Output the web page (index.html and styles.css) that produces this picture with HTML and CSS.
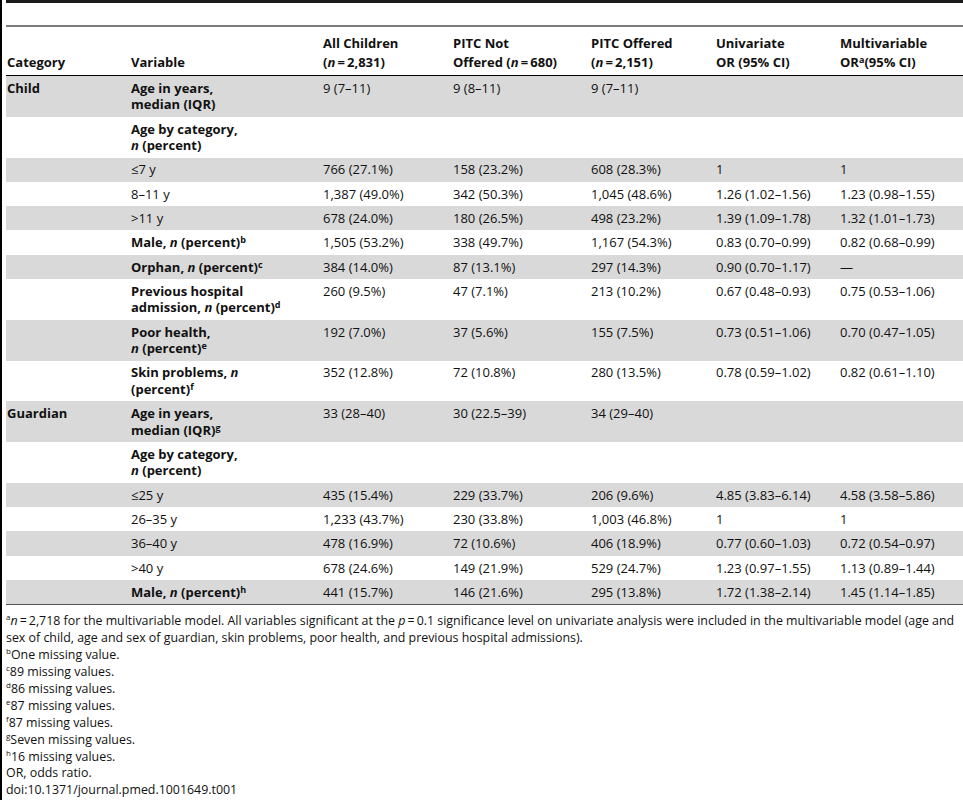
FILE: index.html
```html
<!DOCTYPE html>
<html lang="en">
<head>
  <meta charset="UTF-8">
  <meta name="viewport" content="width=device-width, initial-scale=1.0">
  <title>Table 1. Characteristics of children and guardians</title>
  <link rel="stylesheet" href="styles.css">
</head>
<body>

  <div class="page">
    <div class="title-rule"></div>

    <!-- Main table -->
    <table class="data-table">
      <colgroup>
        <col class="col-cat">
        <col class="col-var">
        <col class="col-all">
        <col class="col-not">
        <col class="col-off">
        <col class="col-uni">
        <col class="col-multi">
      </colgroup>
      <thead>
        <tr>
          <th>Category</th>
          <th>Variable</th>
          <th>All Children<br>(<i>n</i>&thinsp;=&thinsp;2,831)</th>
          <th>PITC Not<br>Offered (<i>n</i>&thinsp;=&thinsp;680)</th>
          <th>PITC Offered<br>(<i>n</i>&thinsp;=&thinsp;2,151)</th>
          <th>Univariate<br>OR (95% CI)</th>
          <th>Multivariable<br>OR<sup>a</sup>(95% CI)</th>
        </tr>
      </thead>
      <tbody>
        <tr class="shade">
          <td class="bold">Child</td>
          <td class="bold">Age in years,<br>median (IQR)</td>
          <td>9 (7–11)</td>
          <td>9 (8–11)</td>
          <td>9 (7–11)</td>
          <td></td>
          <td></td>
        </tr>
        <tr>
          <td></td>
          <td class="bold">Age by category,<br><i>n</i> (percent)</td>
          <td></td><td></td><td></td><td></td><td></td>
        </tr>
        <tr class="shade">
          <td></td>
          <td>≤7 y</td>
          <td>766 (27.1%)</td>
          <td>158 (23.2%)</td>
          <td>608 (28.3%)</td>
          <td>1</td>
          <td>1</td>
        </tr>
        <tr>
          <td></td>
          <td>8–11 y</td>
          <td>1,387 (49.0%)</td>
          <td>342 (50.3%)</td>
          <td>1,045 (48.6%)</td>
          <td>1.26 (1.02–1.56)</td>
          <td>1.23 (0.98–1.55)</td>
        </tr>
        <tr class="shade">
          <td></td>
          <td>&gt;11 y</td>
          <td>678 (24.0%)</td>
          <td>180 (26.5%)</td>
          <td>498 (23.2%)</td>
          <td>1.39 (1.09–1.78)</td>
          <td>1.32 (1.01–1.73)</td>
        </tr>
        <tr>
          <td></td>
          <td class="bold">Male, <i>n</i> (percent)<sup>b</sup></td>
          <td>1,505 (53.2%)</td>
          <td>338 (49.7%)</td>
          <td>1,167 (54.3%)</td>
          <td>0.83 (0.70–0.99)</td>
          <td>0.82 (0.68–0.99)</td>
        </tr>
        <tr class="shade">
          <td></td>
          <td class="bold">Orphan, <i>n</i> (percent)<sup>c</sup></td>
          <td>384 (14.0%)</td>
          <td>87 (13.1%)</td>
          <td>297 (14.3%)</td>
          <td>0.90 (0.70–1.17)</td>
          <td>—</td>
        </tr>
        <tr>
          <td></td>
          <td class="bold">Previous hospital<br>admission, <i>n</i> (percent)<sup>d</sup></td>
          <td>260 (9.5%)</td>
          <td>47 (7.1%)</td>
          <td>213 (10.2%)</td>
          <td>0.67 (0.48–0.93)</td>
          <td>0.75 (0.53–1.06)</td>
        </tr>
        <tr class="shade">
          <td></td>
          <td class="bold">Poor health,<br><i>n</i> (percent)<sup>e</sup></td>
          <td>192 (7.0%)</td>
          <td>37 (5.6%)</td>
          <td>155 (7.5%)</td>
          <td>0.73 (0.51–1.06)</td>
          <td>0.70 (0.47–1.05)</td>
        </tr>
        <tr>
          <td></td>
          <td class="bold">Skin problems, <i>n</i><br>(percent)<sup>f</sup></td>
          <td>352 (12.8%)</td>
          <td>72 (10.8%)</td>
          <td>280 (13.5%)</td>
          <td>0.78 (0.59–1.02)</td>
          <td>0.82 (0.61–1.10)</td>
        </tr>
        <tr class="shade">
          <td class="bold">Guardian</td>
          <td class="bold">Age in years,<br>median (IQR)<sup>g</sup></td>
          <td>33 (28–40)</td>
          <td>30 (22.5–39)</td>
          <td>34 (29–40)</td>
          <td></td>
          <td></td>
        </tr>
        <tr>
          <td></td>
          <td class="bold">Age by category,<br><i>n</i> (percent)</td>
          <td></td><td></td><td></td><td></td><td></td>
        </tr>
        <tr class="shade">
          <td></td>
          <td>≤25 y</td>
          <td>435 (15.4%)</td>
          <td>229 (33.7%)</td>
          <td>206 (9.6%)</td>
          <td>4.85 (3.83–6.14)</td>
          <td>4.58 (3.58–5.86)</td>
        </tr>
        <tr>
          <td></td>
          <td>26–35 y</td>
          <td>1,233 (43.7%)</td>
          <td>230 (33.8%)</td>
          <td>1,003 (46.8%)</td>
          <td>1</td>
          <td>1</td>
        </tr>
        <tr class="shade">
          <td></td>
          <td>36–40 y</td>
          <td>478 (16.9%)</td>
          <td>72 (10.6%)</td>
          <td>406 (18.9%)</td>
          <td>0.77 (0.60–1.03)</td>
          <td>0.72 (0.54–0.97)</td>
        </tr>
        <tr>
          <td></td>
          <td>&gt;40 y</td>
          <td>678 (24.6%)</td>
          <td>149 (21.9%)</td>
          <td>529 (24.7%)</td>
          <td>1.23 (0.97–1.55)</td>
          <td>1.13 (0.89–1.44)</td>
        </tr>
        <tr class="shade">
          <td></td>
          <td class="bold">Male, <i>n</i> (percent)<sup>h</sup></td>
          <td>441 (15.7%)</td>
          <td>146 (21.6%)</td>
          <td>295 (13.8%)</td>
          <td>1.72 (1.38–2.14)</td>
          <td>1.45 (1.14–1.85)</td>
        </tr>
      </tbody>
    </table>

    <!-- Footnotes -->
    <div class="footnotes">
      <p><sup>a</sup><i>n</i>&thinsp;=&thinsp;2,718 for the multivariable model. All variables significant at the <i>p</i>&thinsp;=&thinsp;0.1 significance level on univariate analysis were included in the multivariable model (age and<br>sex of child, age and sex of guardian, skin problems, poor health, and previous hospital admissions).</p>
      <p><sup>b</sup>One missing value.</p>
      <p><sup>c</sup>89 missing values.</p>
      <p><sup>d</sup>86 missing values.</p>
      <p><sup>e</sup>87 missing values.</p>
      <p><sup>f</sup>87 missing values.</p>
      <p><sup>g</sup>Seven missing values.</p>
      <p><sup>h</sup>16 missing values.</p>
      <p>OR, odds ratio.</p>
      <p>doi:10.1371/journal.pmed.1001649.t001</p>
    </div>
  </div>

</body>
</html>
```

FILE: styles.css
```css
body {
  margin: 0;
  padding: 0;
  background: #fff;
  color: #111;
  font-family: "Open Sans", "DejaVu Sans", sans-serif;
  font-size: 13px;
}

.page {
  min-height: 800px;
  border-left: 2px solid #000;
  padding-left: 4px;
  box-sizing: border-box;
}

.title-rule {
  height: 22px;
  border-top: 3px solid #1a1a1a;
}

/* Table */
.data-table {
  width: 957px;
  border-collapse: collapse;
  table-layout: fixed;
  border-top: 2px solid #7d7d7d;
  border-bottom: 1px solid #555;
}

.col-cat { width: 124px; }
.col-var { width: 192px; }
.col-all { width: 130px; }
.col-not { width: 138px; }
.col-off { width: 125px; }
.col-uni { width: 124px; }
.col-multi { width: 124px; }

.data-table th {
  text-align: left;
  vertical-align: bottom;
  font-weight: bold;
  line-height: 19px;
  padding: 6.5px 4px 3.5px 1px;
  border-bottom: 1px solid #000;
}

.data-table td {
  text-align: left;
  vertical-align: top;
  line-height: 16.5px;
  padding: 3.9px 4px 3.9px 1px;
}

.data-table .shade td {
  background-color: #d9d9d9;
}

.bold {
  font-weight: bold;
}

sup {
  font-size: 9px;
  line-height: 0;
  vertical-align: 4px;
}

/* Footnotes */
.footnotes {
  margin-top: 8px;
  font-size: 12.4px;
}

.footnotes p {
  margin: 0;
  line-height: 16.9px;
}

.footnotes sup {
  font-size: 8px;
  vertical-align: 5px;
}
```
